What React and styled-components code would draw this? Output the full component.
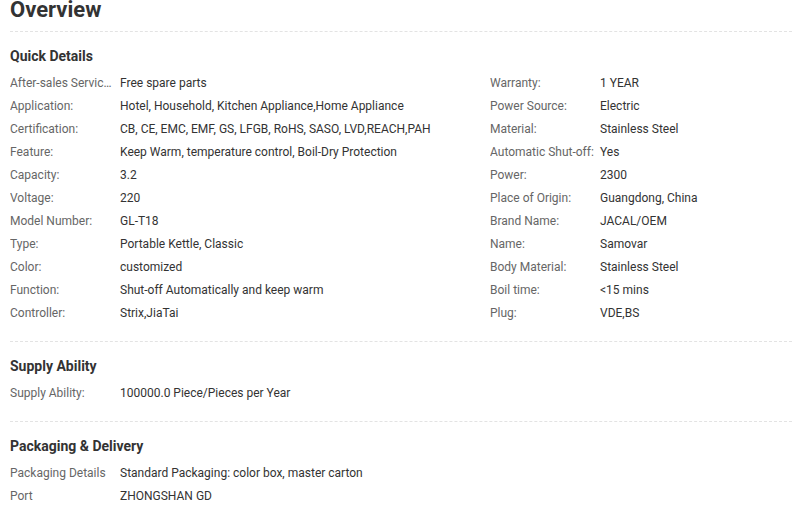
import React from 'react'
import styled, { createGlobalStyle } from 'styled-components'

const Global = createGlobalStyle`
	body {
		margin: 0;
		background: #fff;
		font-family: Roboto, "Liberation Sans", Arial, sans-serif;
		color: #333;
		overflow: hidden;
	}
`

const Page = styled.div`
	padding-left: 10px;
`

const Title = styled.h1`
	margin: -3px 0 0;
	padding-bottom: 8px;
	font-size: 22px;
	line-height: 26px;
	font-weight: 700;
	color: #333;
	border-bottom: 1px dashed #e3e3e3;
`

const Section = styled.section`
	padding: 14px 0 17px;
	border-bottom: ${p => p.last ? 'none' : '1px dashed #e3e3e3'};
`

const Heading = styled.h2`
	margin: 0 0 5px;
	font-size: 14px;
	line-height: 20px;
	font-weight: 700;
	color: #333;
`

const Grid = styled.div`
	display: grid;
	grid-template-columns: ${p => p.cols === 2 ? '480px 1fr' : '1fr'};
`

const Col = styled.div`
	display: flex;
	flex-direction: column;
`

const Row = styled.div`
	display: flex;
	height: 23px;
	align-items: center;
	font-size: 12px;
`

const Label = styled.span`
	width: 104px;
	margin-right: 6px;
	flex: none;
	color: #666;
	white-space: nowrap;
	overflow: hidden;
	text-overflow: ellipsis;
`

const Value = styled.span`
	color: #333;
	white-space: nowrap;
`

const left = [
	['After-sales Service Provided:', 'Free spare parts'],
	['Application:', 'Hotel, Household, Kitchen Appliance,Home Appliance'],
	['Certification:', 'CB, CE, EMC, EMF, GS, LFGB, RoHS, SASO, LVD,REACH,PAH'],
	['Feature:', 'Keep Warm, temperature control, Boil-Dry Protection'],
	['Capacity:', '3.2'],
	['Voltage:', '220'],
	['Model Number:', 'GL-T18'],
	['Type:', 'Portable Kettle, Classic'],
	['Color:', 'customized'],
	['Function:', 'Shut-off Automatically and keep warm'],
	['Controller:', 'Strix,JiaTai'],
]

const right = [
	['Warranty:', '1 YEAR'],
	['Power Source:', 'Electric'],
	['Material:', 'Stainless Steel'],
	['Automatic Shut-off:', 'Yes'],
	['Power:', '2300'],
	['Place of Origin:', 'Guangdong, China'],
	['Brand Name:', 'JACAL/OEM'],
	['Name:', 'Samovar'],
	['Body Material:', 'Stainless Steel'],
	['Boil time:', '<15 mins'],
	['Plug:', 'VDE,BS'],
]

const Rows = ({ items }) => (
	<Col>
		{items.map(([k, v]) => (
			<Row key={k}>
				<Label>{k}</Label>
				<Value>{v}</Value>
			</Row>
		))}
	</Col>
)

export default function App() {
	return (
		<Page>
			<Global />
			<Title>Overview</Title>
			<Section>
				<Heading>Quick Details</Heading>
				<Grid cols={2}>
					<Rows items={left} />
					<Rows items={right} />
				</Grid>
			</Section>
			<Section>
				<Heading>Supply Ability</Heading>
				<Rows items={[['Supply Ability:', '100000.0 Piece/Pieces per Year']]} />
			</Section>
			<Section last>
				<Heading>Packaging &amp; Delivery</Heading>
				<Rows items={[['Packaging Details', 'Standard Packaging: color box, master carton'], ['Port', 'ZHONGSHAN GD']]} />
			</Section>
		</Page>
	)
}
